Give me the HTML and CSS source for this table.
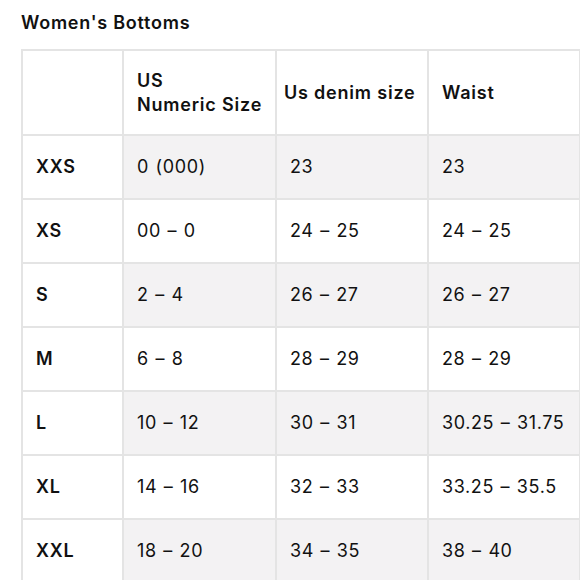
FILE: index.html
```html
<!DOCTYPE html>
<html>
<head>
<meta charset="utf-8">
<link rel="stylesheet" href="styles.css">
</head>
<body>
<h1 class="title">Women's Bottoms</h1>
<table class="chart">
  <colgroup>
    <col class="c1"><col class="c2"><col class="c3"><col class="c4">
  </colgroup>
  <thead>
    <tr><th></th><th>US<br>Numeric Size</th><th class="tight">Us denim size</th><th>Waist</th></tr>
  </thead>
  <tbody>
    <tr class="odd"><th>XXS</th><td>0 (000)</td><td>23</td><td>23</td></tr>
    <tr><th>XS</th><td>00 – 0</td><td>24 – 25</td><td>24 – 25</td></tr>
    <tr class="odd"><th>S</th><td>2 – 4</td><td>26 – 27</td><td>26 – 27</td></tr>
    <tr><th>M</th><td>6 – 8</td><td>28 – 29</td><td>28 – 29</td></tr>
    <tr class="odd"><th>L</th><td>10 – 12</td><td>30 – 31</td><td>30.25 – 31.75</td></tr>
    <tr><th>XL</th><td>14 – 16</td><td>32 – 33</td><td>33.25 – 35.5</td></tr>
    <tr class="odd"><th>XXL</th><td>18 – 20</td><td>34 – 35</td><td>38 – 40</td></tr>
  </tbody>
</table>
</body>
</html>
```
FILE: styles.css
```css
html, body {
  margin: 0;
  padding: 0;
  background: #fff;
}
body {
  font-family: Inter, "Noto Sans", sans-serif;
  color: #111;
  padding: 0 0 0 21px;
}
.title {
  margin: 0;
  padding-top: 11px;
  font-size: 18px;
  line-height: 24px;
  font-weight: 600;
  letter-spacing: 0.75px;
  height: 38px;
}
.chart {
  border-collapse: collapse;
  table-layout: fixed;
  width: 558px;
  font-size: 18px;
}
.c1 { width: 101px; }
.c2 { width: 153px; }
.c3 { width: 152px; }
.c4 { width: 152px; }
.chart th, .chart td {
  border: 2px solid #e4e4e4;
  padding: 0 0 0 13px;
  text-align: left;
  vertical-align: middle;
  line-height: 24px;
  white-space: nowrap;
}
.chart thead th {
  height: 83px;
  font-weight: 600;
  letter-spacing: 0.8px;
}
.chart thead th.tight {
  padding-left: 7px;
}
.chart tbody th {
  font-weight: 600;
  height: 62px;
  letter-spacing: 0.8px;
}
.chart tbody td {
  font-weight: 400;
  letter-spacing: 0.6px;
  word-spacing: 1px;
}
.chart tr.odd td {
  background: #f3f2f3;
}
```
